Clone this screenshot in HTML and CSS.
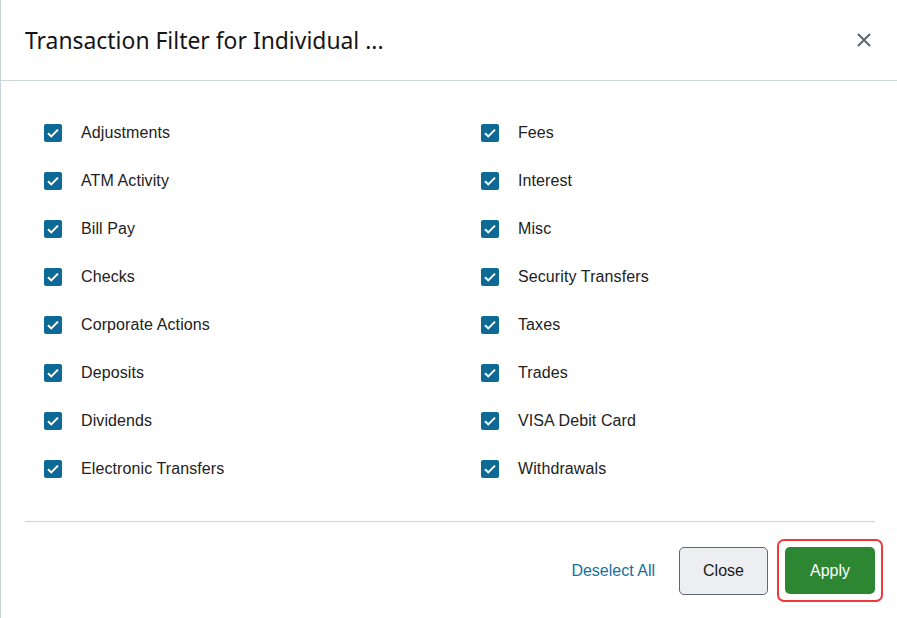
FILE: index.html
```html
<!DOCTYPE html>
<html lang="en">
<head>
  <meta charset="UTF-8" />
  <title>Transaction Filter</title>
  <link rel="stylesheet" href="styles.css">
</head>
<body>
  <div class="modal">
    <div class="modal-header">
      <h2>Transaction Filter for Individual ...</h2>
      <button class="close-x" aria-label="Close">
        <svg width="14" height="14" viewBox="0 0 14 14"><path d="M1 1L13 13M13 1L1 13" stroke="#5b6670" stroke-width="2"/></svg>
      </button>
    </div>

    <div class="modal-body">
      <div class="options">
        <label class="option"><span class="box"></span>Adjustments</label>
        <label class="option"><span class="box"></span>Fees</label>
        <label class="option"><span class="box"></span>ATM Activity</label>
        <label class="option"><span class="box"></span>Interest</label>
        <label class="option"><span class="box"></span>Bill Pay</label>
        <label class="option"><span class="box"></span>Misc</label>
        <label class="option"><span class="box"></span>Checks</label>
        <label class="option"><span class="box"></span>Security Transfers</label>
        <label class="option"><span class="box"></span>Corporate Actions</label>
        <label class="option"><span class="box"></span>Taxes</label>
        <label class="option"><span class="box"></span>Deposits</label>
        <label class="option"><span class="box"></span>Trades</label>
        <label class="option"><span class="box"></span>Dividends</label>
        <label class="option"><span class="box"></span>VISA Debit Card</label>
        <label class="option"><span class="box"></span>Electronic Transfers</label>
        <label class="option"><span class="box"></span>Withdrawals</label>
      </div>
    </div>

    <div class="modal-footer">
      <a href="#" class="link">Deselect All</a>
      <button class="btn btn-secondary">Close</button>
      <span class="highlight"><button class="btn btn-primary">Apply</button></span>
    </div>
  </div>
</body>
</html>
```

FILE: styles.css
```css
* {
  box-sizing: border-box;
}
body {
  margin: 0;
  background: #fff;
  font-family: "Liberation Sans", Arial, sans-serif;
  color: #222;
}

.modal {
  width: 897px;
  height: 618px;
  border-left: 1px solid #c9d1da;
  background: #fff;
}

.modal-header {
  height: 81px;
  display: flex;
  align-items: center;
  justify-content: space-between;
  padding: 0 26px 0 24px;
  border-bottom: 1px solid #cfd6de;
}

.modal-header h2 {
  margin: 0;
  font-family: "Noto Sans", "Open Sans", sans-serif;
  font-weight: 400;
  font-size: 22.9px;
  color: #151515;
}

.close-x {
  background: none;
  border: none;
  padding: 0;
  cursor: pointer;
  display: flex;
}

.modal-body {
  padding: 28px 24px 0 43px;
}

.options {
  display: grid;
  grid-template-columns: 437px 1fr;
}

.option {
  height: 48px;
  display: flex;
  align-items: center;
  gap: 19px;
  font-size: 16px;
  color: #222;
  letter-spacing: 0.1px;
  cursor: pointer;
}

.box {
  width: 18px;
  height: 18px;
  border-radius: 2px;
  background: #0d6a94 url("data:image/svg+xml,%3Csvg xmlns='http://www.w3.org/2000/svg' width='18' height='18'%3E%3Cpath d='M4 9.2l3.3 3.2L14 5.6' fill='none' stroke='white' stroke-width='2'/%3E%3C/svg%3E") no-repeat center;
  flex-shrink: 0;
}

.modal-footer {
  margin: 28px 22px 0 24px;
  border-top: 1px solid #cfd2d6;
  padding-top: 17px;
  display: flex;
  align-items: center;
  justify-content: flex-end;
}

.link {
  color: #13719f;
  text-decoration: none;
  font-size: 16px;
  margin-right: 24px;
}

.btn {
  font-family: "Liberation Sans", Arial, sans-serif;
  font-size: 16px;
  border-radius: 5px;
  cursor: pointer;
}

.btn-secondary {
  width: 89px;
  height: 48px;
  background: #eceef2;
  border: 1px solid #5f6872;
  color: #1a1a1a;
  margin-right: 9px;
}

.highlight {
  display: inline-flex;
  padding: 6px;
  margin-right: -8px;
  border: 2px solid #ee3a3a;
  border-radius: 7px;
}

.btn-primary {
  width: 90px;
  height: 47px;
  background: #2d8631;
  border: none;
  color: #fff;
}
```
